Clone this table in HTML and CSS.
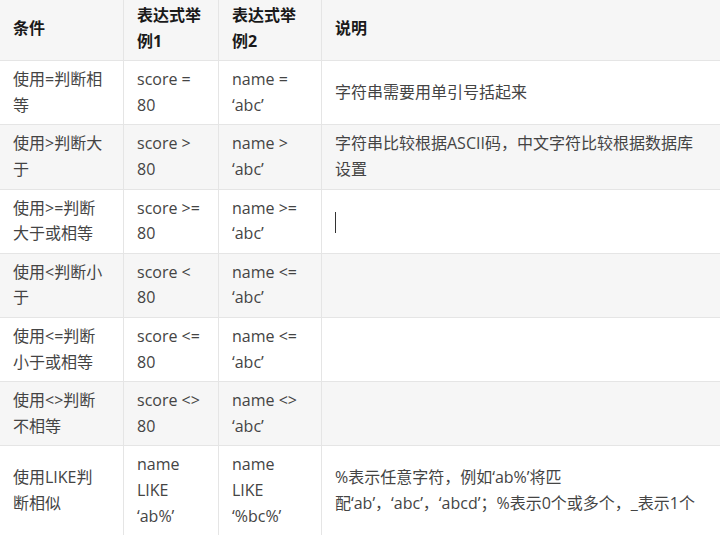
FILE: index.html
```html
<!DOCTYPE html>
<html lang="zh">
<head>
<meta charset="utf-8">
<link rel="stylesheet" href="styles.css">
</head>
<body>
<table class="ops">
  <colgroup>
    <col class="c1"><col class="c2"><col class="c3"><col class="c4">
  </colgroup>
  <thead>
    <tr><th>条件</th><th class="ex">表达式举例1</th><th>表达式举例2</th><th>说明</th></tr>
  </thead>
  <tbody>
    <tr><td>使用=判断相等</td><td class="ex">score = 80</td><td>name = ‘abc’</td><td>字符串需要用单引号括起来</td></tr>
    <tr><td>使用&gt;判断大于</td><td class="ex">score &gt; 80</td><td>name &gt; ‘abc’</td><td>字符串比较根据ASCII码，中文字符比较根据数据库设置</td></tr>
    <tr><td>使用&gt;=判断大于或相等</td><td class="ex">score &gt;= 80</td><td>name &gt;= ‘abc’</td><td><span class="caret"></span></td></tr>
    <tr><td>使用&lt;判断小于</td><td class="ex">score &lt; 80</td><td>name &lt;= ‘abc’</td><td></td></tr>
    <tr><td>使用&lt;=判断小于或相等</td><td class="ex">score &lt;= 80</td><td>name &lt;= ‘abc’</td><td></td></tr>
    <tr><td>使用&lt;&gt;判断不相等</td><td class="ex">score &lt;&gt; 80</td><td>name &lt;&gt; ‘abc’</td><td></td></tr>
    <tr><td>使用LIKE判断相似</td><td class="ex">name LIKE ‘ab%’</td><td>name LIKE ‘%bc%’</td><td>%表示任意字符，例如‘ab%’将匹<br>配‘ab’，‘abc’，‘abcd’；%表示0个或多个，_表示1个</td></tr>
  </tbody>
</table>
</body>
</html>
```

FILE: styles.css
```css
html, body {
  margin: 0;
  padding: 0;
  background: #ffffff;
  overflow: hidden;
}

body {
  font-family: "Open Sans", "Noto Sans CJK SC", sans-serif;
  font-size: 16px;
  line-height: 1.6;
  color: #444444;
}

.ops {
  border-collapse: collapse;
  table-layout: fixed;
  width: 723px;
  margin: -4px 0 0 -1px;
}

.c1 { width: 124px; }
.c2 { width: 95px; }
.c3 { width: 103px; }
.c4 { width: 401px; }

.ops th,
.ops td {
  border: 1px solid #e5e5e5;
  padding: 6px 18px 6px 13px;
  text-align: left;
  vertical-align: middle;
  word-break: break-word;
}

.ops .ex {
  padding-right: 13px;
}

.ops th {
  font-weight: 700;
  color: #1a1a1a;
}

.ops thead tr,
.ops tbody tr:nth-child(even) {
  background: #f6f6f6;
}

.caret {
  display: inline-block;
  width: 1px;
  height: 21px;
  background: #333333;
  vertical-align: middle;
}
```
